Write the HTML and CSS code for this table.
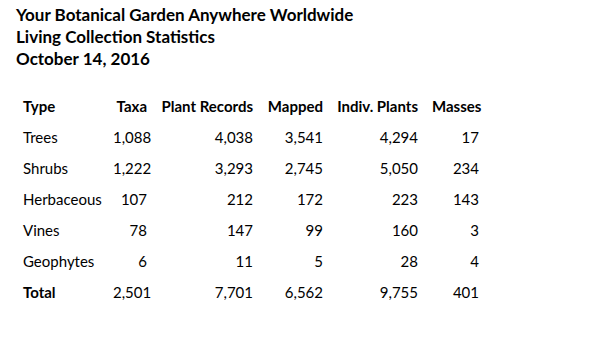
FILE: index.html
```html
<!DOCTYPE html>
<html lang="en">
<head>
<meta charset="utf-8">
<title>Living Collection Statistics</title>
<link rel="stylesheet" href="styles.css">
</head>
<body>
<div class="report">
  <header class="report-head">
    <div class="head-line">Your Botanical Garden Anywhere Worldwide</div>
    <div class="head-line">Living Collection Statistics</div>
    <div class="head-line">October 14, 2016</div>
  </header>
  <table class="stats">
    <colgroup>
      <col class="c-type">
      <col class="c-taxa">
      <col class="c-records">
      <col class="c-mapped">
      <col class="c-indiv">
      <col class="c-masses">
    </colgroup>
    <thead>
      <tr>
        <th class="lbl">Type</th>
        <th>Taxa</th>
        <th>Plant Records</th>
        <th>Mapped</th>
        <th>Indiv. Plants</th>
        <th>Masses</th>
      </tr>
    </thead>
    <tbody>
      <tr><td class="lbl">Trees</td><td>1,088</td><td>4,038</td><td>3,541</td><td>4,294</td><td>17</td></tr>
      <tr><td class="lbl">Shrubs</td><td>1,222</td><td>3,293</td><td>2,745</td><td>5,050</td><td>234</td></tr>
      <tr><td class="lbl">Herbaceous</td><td>107</td><td>212</td><td>172</td><td>223</td><td>143</td></tr>
      <tr><td class="lbl">Vines</td><td>78</td><td>147</td><td>99</td><td>160</td><td>3</td></tr>
      <tr><td class="lbl">Geophytes</td><td>6</td><td>11</td><td>5</td><td>28</td><td>4</td></tr>
      <tr class="total"><td class="lbl">Total</td><td>2,501</td><td>7,701</td><td>6,562</td><td>9,755</td><td>401</td></tr>
    </tbody>
  </table>
</div>
</body>
</html>
```
FILE: styles.css
```css
html, body {
  margin: 0;
  padding: 0;
  background: #ffffff;
}

body {
  font-family: Lato, "Open Sans", "Liberation Sans", sans-serif;
  color: #000000;
}

.report {
  padding: 4px 0 0 16px;
}

.report-head {
  font-weight: 700;
  font-size: 17px;
  line-height: 22px;
}

.stats {
  margin-top: 21px;
  border-collapse: separate;
  border-spacing: 0;
  table-layout: fixed;
  width: 470px;
  font-size: 15px;
}

.c-type { width: 90px; }
.c-taxa { width: 48px; }
.c-records { width: 106px; }
.c-mapped { width: 70px; }
.c-indiv { width: 95px; }
.c-masses { width: 61px; }

.stats th,
.stats td {
  padding: 0 7px;
  height: 31px;
  line-height: 31px;
  text-align: right;
  white-space: nowrap;
  vertical-align: middle;
}

.stats th {
  font-weight: 700;
}

.stats .lbl {
  text-align: left;
}

.stats .total .lbl {
  font-weight: 700;
}
```
